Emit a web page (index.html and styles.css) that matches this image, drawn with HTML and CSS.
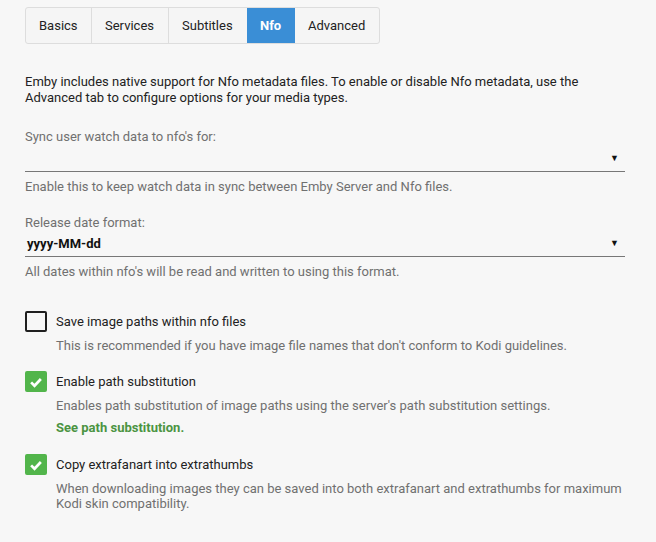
FILE: index.html
```html
<!DOCTYPE html>
<html>
<head>
<meta charset="utf-8">
<link rel="stylesheet" href="styles.css">
</head>
<body>
<div class="page">
  <div class="tabs">
    <div class="tab">Basics</div>
    <div class="tab">Services</div>
    <div class="tab">Subtitles</div>
    <div class="tab active">Nfo</div>
    <div class="tab">Advanced</div>
  </div>

  <p class="intro">Emby includes native support for Nfo metadata files. To enable or disable Nfo metadata, use the Advanced tab to configure options for your media types.</p>

  <div class="field first">
    <div class="label">Sync user watch data to nfo's for:</div>
    <div class="select empty"><span class="value"></span><span class="arrow">▼</span></div>
    <div class="desc">Enable this to keep watch data in sync between Emby Server and Nfo files.</div>
  </div>

  <div class="field">
    <div class="label">Release date format:</div>
    <div class="select"><span class="value">yyyy-MM-dd</span><span class="arrow">▼</span></div>
    <div class="desc">All dates within nfo's will be read and written to using this format.</div>
  </div>

  <div class="checks">
    <div class="check">
      <div class="row">
        <span class="box"></span>
        <span class="check-label">Save image paths within nfo files</span>
      </div>
      <div class="check-desc">This is recommended if you have image file names that don't conform to Kodi guidelines.</div>
    </div>

    <div class="check">
      <div class="row">
        <span class="box on"><svg viewBox="0 0 24 24" width="20" height="20"><path d="M5.5 12.5l4.5 4.5L18.5 8" fill="none" stroke="#fff" stroke-width="3.6" stroke-linecap="butt" stroke-linejoin="miter"/></svg></span>
        <span class="check-label">Enable path substitution</span>
      </div>
      <div class="check-desc">Enables path substitution of image paths using the server's path substitution settings.</div>
      <div class="check-link">See path substitution.</div>
    </div>

    <div class="check">
      <div class="row">
        <span class="box on"><svg viewBox="0 0 24 24" width="20" height="20"><path d="M5.5 12.5l4.5 4.5L18.5 8" fill="none" stroke="#fff" stroke-width="3.6" stroke-linecap="butt" stroke-linejoin="miter"/></svg></span>
        <span class="check-label">Copy extrafanart into extrathumbs</span>
      </div>
      <div class="check-desc">When downloading images they can be saved into both extrafanart and extrathumbs for maximum Kodi skin compatibility.</div>
    </div>
  </div>
</div>
</body>
</html>
```

FILE: styles.css
```css
html, body {
  margin: 0;
  padding: 0;
  background: #f7f7f7;
}
body {
  font-family: Roboto, "Liberation Sans", sans-serif;
  font-size: 13px;
  color: #222;
}
.page {
  width: 600px;
  padding: 7px 0 0 25px;
}
.tabs {
  display: inline-flex;
  border: 1px solid #ddd;
  border-radius: 3px;
  background: #f5f5f5;
  height: 35px;
}
.tab {
  display: flex;
  align-items: center;
  padding: 0 13px;
  font-size: 13px;
  color: #222;
  border-left: 1px solid #ddd;
}
.tab:first-child {
  border-left: none;
}
.tab.active {
  background: #3a8ed6;
  color: #fff;
  font-weight: bold;
  border-left: none;
}
.tab.active + .tab {
  border-left: none;
}
.tab:nth-child(1) { width: 39px; }
.tab:nth-child(2) { width: 50px; }
.tab:nth-child(3) { width: 52px; }
.tab:nth-child(4) { width: 22px; }
.tab:nth-child(5) { width: 58px; }

.intro {
  margin: 30px 0 0;
  line-height: 16px;
  color: #222;
}
.field {
  margin-top: 19px;
}
.field.first {
  margin-top: 22px;
}
.label {
  color: #707070;
  line-height: 17px;
}
.select {
  display: flex;
  align-items: center;
  justify-content: space-between;
  height: 23px;
  padding-bottom: 4px;
  border-bottom: 1px solid #777;
  box-sizing: border-box;
  margin-top: 3px;
}
.select.empty {
  height: 24px;
  padding-bottom: 3px;
}
.select .value {
  font-weight: bold;
  color: #111;
  padding-left: 2px;
}
.arrow {
  font-size: 9px;
  padding-right: 6px;
  color: #111;
}
.desc {
  color: #707070;
  margin-top: 6px;
  line-height: 17px;
}
.checks {
  margin-top: 31px;
}
.check {
  margin-bottom: 18px;
}
.check:nth-child(2) {
  margin-bottom: 19px;
}
.row {
  display: flex;
  align-items: center;
  gap: 9px;
}
.box {
  width: 22px;
  height: 21px;
  box-sizing: border-box;
  border: 2px solid #1f1f1f;
  border-radius: 2px;
  display: flex;
  align-items: center;
  justify-content: center;
}
.box.on {
  background: #52b54b;
  border-color: #52b54b;
}
.check-label {
  color: #222;
}
.check-desc {
  margin-left: 31px;
  margin-top: 6px;
  color: #707070;
  line-height: 15px;
}
.check-link {
  margin-left: 31px;
  margin-top: 7px;
  color: #4b9442;
  font-weight: bold;
  line-height: 15px;
}
```
